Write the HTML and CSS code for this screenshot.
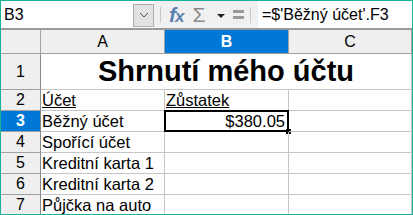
FILE: index.html
```html
<!DOCTYPE html>
<html lang="cs">
  <head>
    <meta charset="utf-8" />
    <title>Shrnutí mého účtu</title>
    <link rel="stylesheet" href="styles.css">
  </head>
  <body>
    <div class="frame">
      <div class="toolbar">
        <div class="name-box">
          <span class="name-text">B3</span>
          <span class="name-drop">
            <svg width="10" height="6" viewBox="0 0 10 6"><polyline points="1,1 5,5 9,1" fill="none" stroke="#555" stroke-width="1" /></svg>
          </span>
        </div>
        <div class="tools">
          <span class="sep"></span>
          <span class="fx"><i>f</i><i class="x">x</i></span>
          <span class="sigma">&Sigma;</span>
          <span class="tri"></span>
          <span class="equal"><b></b><b></b></span>
          <span class="sep"></span>
        </div>
        <div class="formula">=$'Běžný účet'.F3</div>
      </div>
      <div class="sheet">
        <div class="corner"></div>
        <div class="col-head">A</div>
        <div class="col-head active">B</div>
        <div class="col-head">C</div>

        <div class="row-head tall">1</div>
        <div class="cell title">Shrnutí mého účtu</div>

        <div class="row-head">2</div>
        <div class="cell"><u>Účet</u></div>
        <div class="cell"><u>Zůstatek</u></div>
        <div class="cell"></div>

        <div class="row-head active">3</div>
        <div class="cell">Běžný účet</div>
        <div class="cell money selected">$380.05<span class="handle"></span></div>
        <div class="cell"></div>

        <div class="row-head">4</div>
        <div class="cell">Spořící účet</div>
        <div class="cell"></div>
        <div class="cell"></div>

        <div class="row-head">5</div>
        <div class="cell">Kreditní karta 1</div>
        <div class="cell"></div>
        <div class="cell"></div>

        <div class="row-head">6</div>
        <div class="cell">Kreditní karta 2</div>
        <div class="cell"></div>
        <div class="cell"></div>

        <div class="row-head">7</div>
        <div class="cell">Půjčka na auto</div>
        <div class="cell"></div>
        <div class="cell"></div>
      </div>
    </div>
  </body>
</html>
```
FILE: styles.css
```css
html, body {
  margin: 0;
  padding: 0;
  background: #ffffff;
}

.frame {
  width: 413px;
  height: 215px;
  box-sizing: border-box;
  border: 1px solid #1ab394;
  overflow: hidden;
  font-family: "Liberation Sans", Arial, sans-serif;
  color: #000000;
}

.toolbar {
  display: flex;
  height: 27px;
  background: #f0f0f0;
  border-bottom: 2px solid #9a9a9a;
}

.name-box {
  display: flex;
  align-items: center;
  width: 153px;
  background: #ffffff;
}

.name-text {
  flex: 1;
  padding-left: 3px;
  font-size: 16px;
}

.name-drop {
  display: flex;
  align-items: center;
  justify-content: center;
  width: 19px;
  height: 21px;
  margin-top: 1px;
  background: #e1e1e1;
  border: 1px solid #adadad;
}

.tools {
  display: flex;
  align-items: center;
  width: 104px;
}

.sep {
  width: 1px;
  height: 16px;
  background: #c8c8c8;
  margin: 0 6px;
}

.fx {
  font-family: "Liberation Sans", Arial, sans-serif;
  font-weight: bold;
  color: #5a80b0;
  font-size: 21px;
  margin-left: 2px;
  letter-spacing: -1px;
}

.fx .x {
  font-size: 17px;
}

.sigma {
  color: #8a8a8a;
  font-size: 21px;
  margin-left: 9px;
}

.tri {
  width: 0;
  height: 0;
  border-left: 4px solid transparent;
  border-right: 4px solid transparent;
  border-top: 4px solid #222222;
  margin-left: 12px;
  margin-top: 3px;
}

.equal {
  display: flex;
  flex-direction: column;
  gap: 3px;
  margin-left: 8px;
}

.equal b {
  display: block;
  width: 11px;
  height: 3px;
  background: #9a9a9a;
}

.formula {
  flex: 1;
  background: #ffffff;
  padding-left: 4px;
  font-size: 16px;
  line-height: 27px;
}

.sheet {
  display: grid;
  grid-template-columns: 40px 124px 124px 1fr;
  grid-template-rows: 24px 36px repeat(6, 21px);
  font-size: 16.5px;
}

.corner,
.col-head,
.row-head {
  background: #efefef;
  border-right: 1px solid #a0a0a0;
  border-bottom: 1px solid #a0a0a0;
  box-sizing: border-box;
}

.col-head {
  display: flex;
  align-items: center;
  justify-content: center;
  font-size: 16px;
}

.row-head {
  display: flex;
  align-items: center;
  justify-content: center;
  border-right: 1px solid #8a8a8a;
  font-size: 16px;
}

.col-head.active,
.row-head.active {
  background: #0078d7;
  color: #ffffff;
  font-weight: bold;
}

.cell {
  position: relative;
  display: flex;
  align-items: center;
  padding-left: 1px;
  border-right: 1px solid #c6c6c6;
  border-bottom: 1px solid #c6c6c6;
  box-sizing: border-box;
  white-space: nowrap;
}

.title {
  grid-column: 2 / 5;
  justify-content: center;
  font-size: 29px;
  font-weight: bold;
  padding-left: 0;
}

.money {
  justify-content: flex-end;
  padding-right: 2px;
}

.selected {
  border: 2px solid #000000;
  margin: -1px 0 0 -1px;
}

.handle {
  position: absolute;
  right: -4px;
  bottom: -4px;
  width: 5px;
  height: 5px;
  background: #000000;
}
```
